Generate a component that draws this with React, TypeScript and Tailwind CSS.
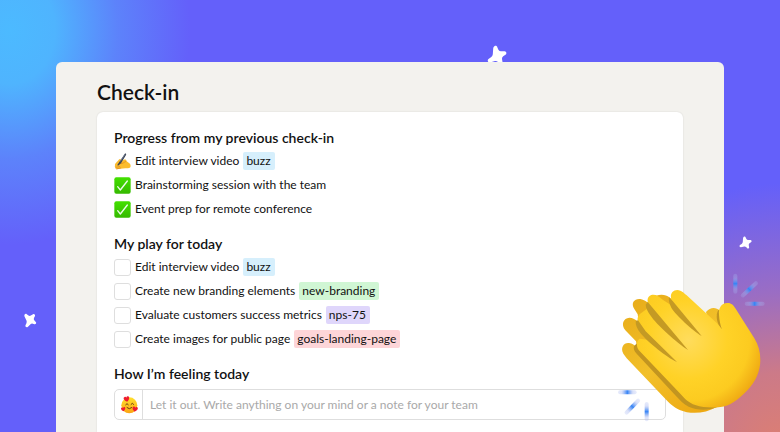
import React from 'react';

type Tone = 'blue' | 'green' | 'purple' | 'red';

type Task = {
  id: string;
  text: string;
  icon?: 'writing' | 'done';
  tag?: string;
  tone?: Tone;
};

const toneClasses: Record<Tone, string> = {
  blue: 'bg-[#d6effc]',
  green: 'bg-[#d0f6d4]',
  purple: 'bg-[#dfd6fb]',
  red: 'bg-[#fdd5d8]',
};

const progress: Task[] = [
  { id: 'p1', text: 'Edit interview video', icon: 'writing', tag: 'buzz', tone: 'blue' },
  { id: 'p2', text: 'Brainstorming session with the team', icon: 'done' },
  { id: 'p3', text: 'Event prep for remote conference', icon: 'done' },
];

const today: Task[] = [
  { id: 't1', text: 'Edit interview video', tag: 'buzz', tone: 'blue' },
  { id: 't2', text: 'Create new branding elements', tag: 'new-branding', tone: 'green' },
  { id: 't3', text: 'Evaluate customers success metrics', tag: 'nps-75', tone: 'purple' },
  { id: 't4', text: 'Create images for public page', tag: 'goals-landing-page', tone: 'red' },
];

const Star = ({ className }: { className: string }) => (
  <svg viewBox="0 0 20 20" className={className} aria-hidden="true">
    <path
      d="M7.4 1.2C8.6.3 10 .8 10.3 2.2L11.4 4.8Q12.4 6.4 14.2 6.3L17.6 6.2C19.6 6.4 20 8.8 18.4 9.8L16.2 11.2Q14.8 12.3 15 14L15.6 17.6C15.6 19.4 13.6 20 12.5 18.7L11 17Q9.6 15.8 8 16.1L3 17.4C1 17.6 0 15.4 1.5 14L4 12.2Q5.6 11 5.8 9.2L6.2 3.6C6.3 2.6 6.6 1.7 7.4 1.2Z"
      fill="#fff"
    />
  </svg>
);

const DoneIcon = () => (
  <svg viewBox="0 0 51 51" className="size-[17px] shrink-0" role="img" aria-label="Done">
    <defs>
      <linearGradient id="done" x1="0" y1="0" x2="0" y2="1">
        <stop offset="0" stopColor="#43e000" />
        <stop offset="1" stopColor="#35b900" />
      </linearGradient>
    </defs>
    <rect x="1" y="1" width="49" height="49" rx="6" fill="url(#done)" />
    <path d="M11 29L19 39L40 12" fill="none" stroke="#eafbe8" strokeWidth="4" strokeLinecap="round" strokeLinejoin="round" />
  </svg>
);

const WritingIcon = () => (
  <svg viewBox="0 0 51 51" className="size-[17px] shrink-0" role="img" aria-label="In progress">
    <path
      d="M3 38C1 33 9 27 13 22C16 18 19 17 21 20L19 26L28 21C34 18 38 20 37 24L46 31C50 34 51 39 49 43C46 47 39 46 34 46L12 48C5 49 2 46 5 43C2 42 2 40 3 38Z"
      fill="#fbbc2e"
    />
    <path d="M5 43L17 41M8 48L20 45M21 32C26 32 30 28 36 25" fill="none" stroke="#d9851c" strokeWidth="2" strokeLinecap="round" />
    <path d="M10 36L16 27L32 3C34 0 38 2 36 6L21 31L12 38Z" fill="#3a4254" />
    <path d="M18 26L33 4" stroke="#7d8ba3" strokeWidth="2" />
  </svg>
);

const LoveFace = () => (
  <svg viewBox="0 0 54 54" className="size-[18px]" aria-hidden="true">
    <defs>
      <linearGradient id="face" x1="0" y1="0" x2="0" y2="1">
        <stop offset="0" stopColor="#ffe02e" />
        <stop offset="1" stopColor="#fba313" />
      </linearGradient>
      <path id="heart" d="M0 7C-11 0-9-8-4-8C-2-8 0-6 0-4C0-6 2-8 4-8C9-8 11 0 0 7Z" fill="#ee1c2e" />
    </defs>
    <circle cx="28" cy="28" r="24" fill="url(#face)" />
    <path d="M17 26Q21 19 25 26M33 25Q37 18 41 25M21 35Q28 42 35 35" fill="none" stroke="#6b3c10" strokeWidth="3" strokeLinecap="round" />
    <use href="#heart" transform="translate(20 10) rotate(-12) scale(1.05)" />
    <use href="#heart" transform="translate(10 40) rotate(-10) scale(.8)" />
    <use href="#heart" transform="translate(45 40) rotate(10)" />
  </svg>
);

const ClappingHands = () => (
  <svg viewBox="0 0 540 516" className="pointer-events-none absolute right-0 bottom-0 h-[172px] w-[180px]" aria-hidden="true">
    <defs>
      <radialGradient id="palm" gradientUnits="userSpaceOnUse" cx="265" cy="240" r="235">
        <stop offset="0" stopColor="#ffdc5c" />
        <stop offset=".5" stopColor="#ffd227" />
        <stop offset=".78" stopColor="#fccb20" />
        <stop offset="1" stopColor="#efa812" />
      </radialGradient>
      <linearGradient id="back" gradientUnits="userSpaceOnUse" x1="80" y1="150" x2="300" y2="460">
        <stop offset="0" stopColor="#e9ae1b" />
        <stop offset=".5" stopColor="#f2c02a" />
        <stop offset="1" stopColor="#eda912" />
      </linearGradient>
      <linearGradient id="spark">
        <stop offset="0" stopColor="#a4b4f0" stopOpacity=".25" />
        <stop offset=".2" stopColor="#a4b4f0" stopOpacity=".4" />
        <stop offset=".5" stopColor="#3584f6" />
        <stop offset=".8" stopColor="#a4b4f0" stopOpacity=".4" />
        <stop offset="1" stopColor="#a4b4f0" stopOpacity=".25" />
      </linearGradient>
    </defs>

    {/* hand behind */}
    <path
      d="M70 281C60 262 72 247 87 249C97 250 104 256 111 263L108 244L76 211C62 194 70 174 88 173C98 173 106 178 116 186L113 163L103 147C91 128 104 115 121 117C132 119 139 124 147 130L168 107C186 101 199 105 208 112L330 205L318 156C331 141 347 141 360 152L372 210L350 441C325 455 300 460 272 458C240 455 222 442 205 426L80 295Z"
      fill="url(#back)"
    />
    {/* shadow between the hands */}
    <path d="M102 258L113 248L340 438L351 441C325 452 292 452 266 440C250 432 240 421 228 408L110 281C102 273 100 266 102 258Z" fill="#c29520" />
    <path d="M355 150C346 165 349 190 366 210L384 165Z" fill="#c29520" />

    {/* front hand */}
    <path
      d="M213 113C210 96 226 86 241 92C247 94 253 100 260 106L350 189C355 195 361 201 366 208C361 196 358 180 357 164C355 144 364 130 381 129C394 128 400 135 406 145L463 235C475 254 481 276 481 300C481 334 467 365 441 392C414 420 389 438 361 441C338 444 309 443 286 435C266 428 254 416 241 401L116 270C108 258 109 243 119 236L142 239L116 190C109 177 114 165 124 159L151 139C138 127 141 109 154 105C166 102 177 109 188 119L216 137Z"
      fill="url(#palm)"
    />

    {/* gaps between the fingers */}
    <path d="M207 112L218 123L305 228C277 211 226 164 214 143C208 132 205 121 207 112Z" fill="#c49a24" />
    <path d="M137 134L143 126L159 145L264 270C232 250 169 194 151 166C143 154 137 144 137 134Z" fill="#c49a24" />
    <path d="M107 184L114 181L137 214L231 306C200 292 143 245 123 221C112 208 106 196 107 184Z" fill="#c49a24" />

    {/* clap sparks */}
    <g fill="url(#spark)">
      <rect x="-30" y="-6" width="60" height="12" rx="6" transform="translate(406 71) rotate(90)" />
      <rect x="-33" y="-6" width="66" height="12" rx="6" transform="translate(448 88) rotate(-43)" />
      <rect x="434" y="125" width="60" height="12" rx="6" />
      <rect x="54" y="391" width="56" height="12" rx="6" />
      <rect x="-31" y="-6" width="62" height="12" rx="6" transform="translate(97 440) rotate(-46)" />
      <rect x="-29" y="-6" width="58" height="12" rx="6" transform="translate(140 455) rotate(90)" />
    </g>
  </svg>
);

const Tag = ({ tone, children }: { tone: Tone; children: React.ReactNode }) => (
  <span className={`ml-1 rounded-xs pr-1 pl-[3px] leading-[18px] ${toneClasses[tone]}`}>{children}</span>
);

const Section = ({ title, tasks }: { title: string; tasks: Task[] }) => (
  <section>
    <h2 className="text-sm leading-5 font-semibold">{title}</h2>
    <ul className="mt-px">
      {tasks.map((task) => (
        <li key={task.id} className="flex h-6 items-center">
          {task.icon === 'writing' && <WritingIcon />}
          {task.icon === 'done' && <DoneIcon />}
          {!task.icon && (
            <input
              id={task.id}
              type="checkbox"
              className="size-[17px] shrink-0 appearance-none rounded-[3px] border border-[#dedede] bg-white checked:bg-[#3cce00]"
            />
          )}
          {task.icon ? (
            <span className="ml-1">{task.text}</span>
          ) : (
            <label htmlFor={task.id} className="ml-1">{task.text}</label>
          )}
          {task.tag && task.tone && <Tag tone={task.tone}>{task.tag}</Tag>}
        </li>
      ))}
    </ul>
  </section>
);

const App = () => {
  return (
    <main className="relative flex min-h-screen flex-col overflow-hidden bg-[#6460fa] bg-[radial-gradient(ellipse_180px_215px_at_10px_30px,#4cbaff_0%,#4fb4fe_25%,#5a8ffbbb_60%,#6460fa00_100%),radial-gradient(ellipse_230px_270px_at_100%_105%,#de7f70_0%,#cc7a88_30%,#9a6dc4_60%,#6460fa00_100%)] px-14 pt-[62px] font-['Lato',sans-serif] text-xs text-[#111]">
      <Star className="absolute top-[45px] left-[487px] size-5" />
      <Star className="absolute top-[236px] right-7 size-[13px]" />
      <Star className="absolute top-[312px] left-[22px] size-[15px] -rotate-30" />

      <div className="relative flex flex-1 flex-col rounded-t-md bg-[#f3f2ee] px-[41px] pt-4">
        <h1 className="text-[21px] leading-7 font-semibold">Check-in</h1>

        <div className="mt-[6px] flex flex-1 flex-col gap-[13px] rounded-t-md bg-white px-[17px] pt-4 pb-3 shadow-[0_0_2px_rgba(0,0,0,0.12)]">
          <Section title="Progress from my previous check-in" tasks={progress} />
          <Section title="My play for today" tasks={today} />

          <section>
            <label htmlFor="feeling" className="block text-sm leading-5 font-semibold">How I’m feeling today</label>
            <div className="mt-[5px] flex h-[31px] overflow-hidden rounded-[5px] border border-[#dedede]">
              <button type="button" aria-label="Pick a mood" className="flex w-7 shrink-0 items-center justify-center border-r border-[#dedede]">
                <LoveFace />
              </button>
              <input
                id="feeling"
                type="text"
                placeholder="Let it out. Write anything on your mind or a note for your team"
                className="min-w-0 flex-1 px-[7px] outline-none placeholder:text-[#a9a9a9]"
              />
            </div>
          </section>
        </div>
      </div>

      <ClappingHands />
    </main>
  );
};

export default App;
